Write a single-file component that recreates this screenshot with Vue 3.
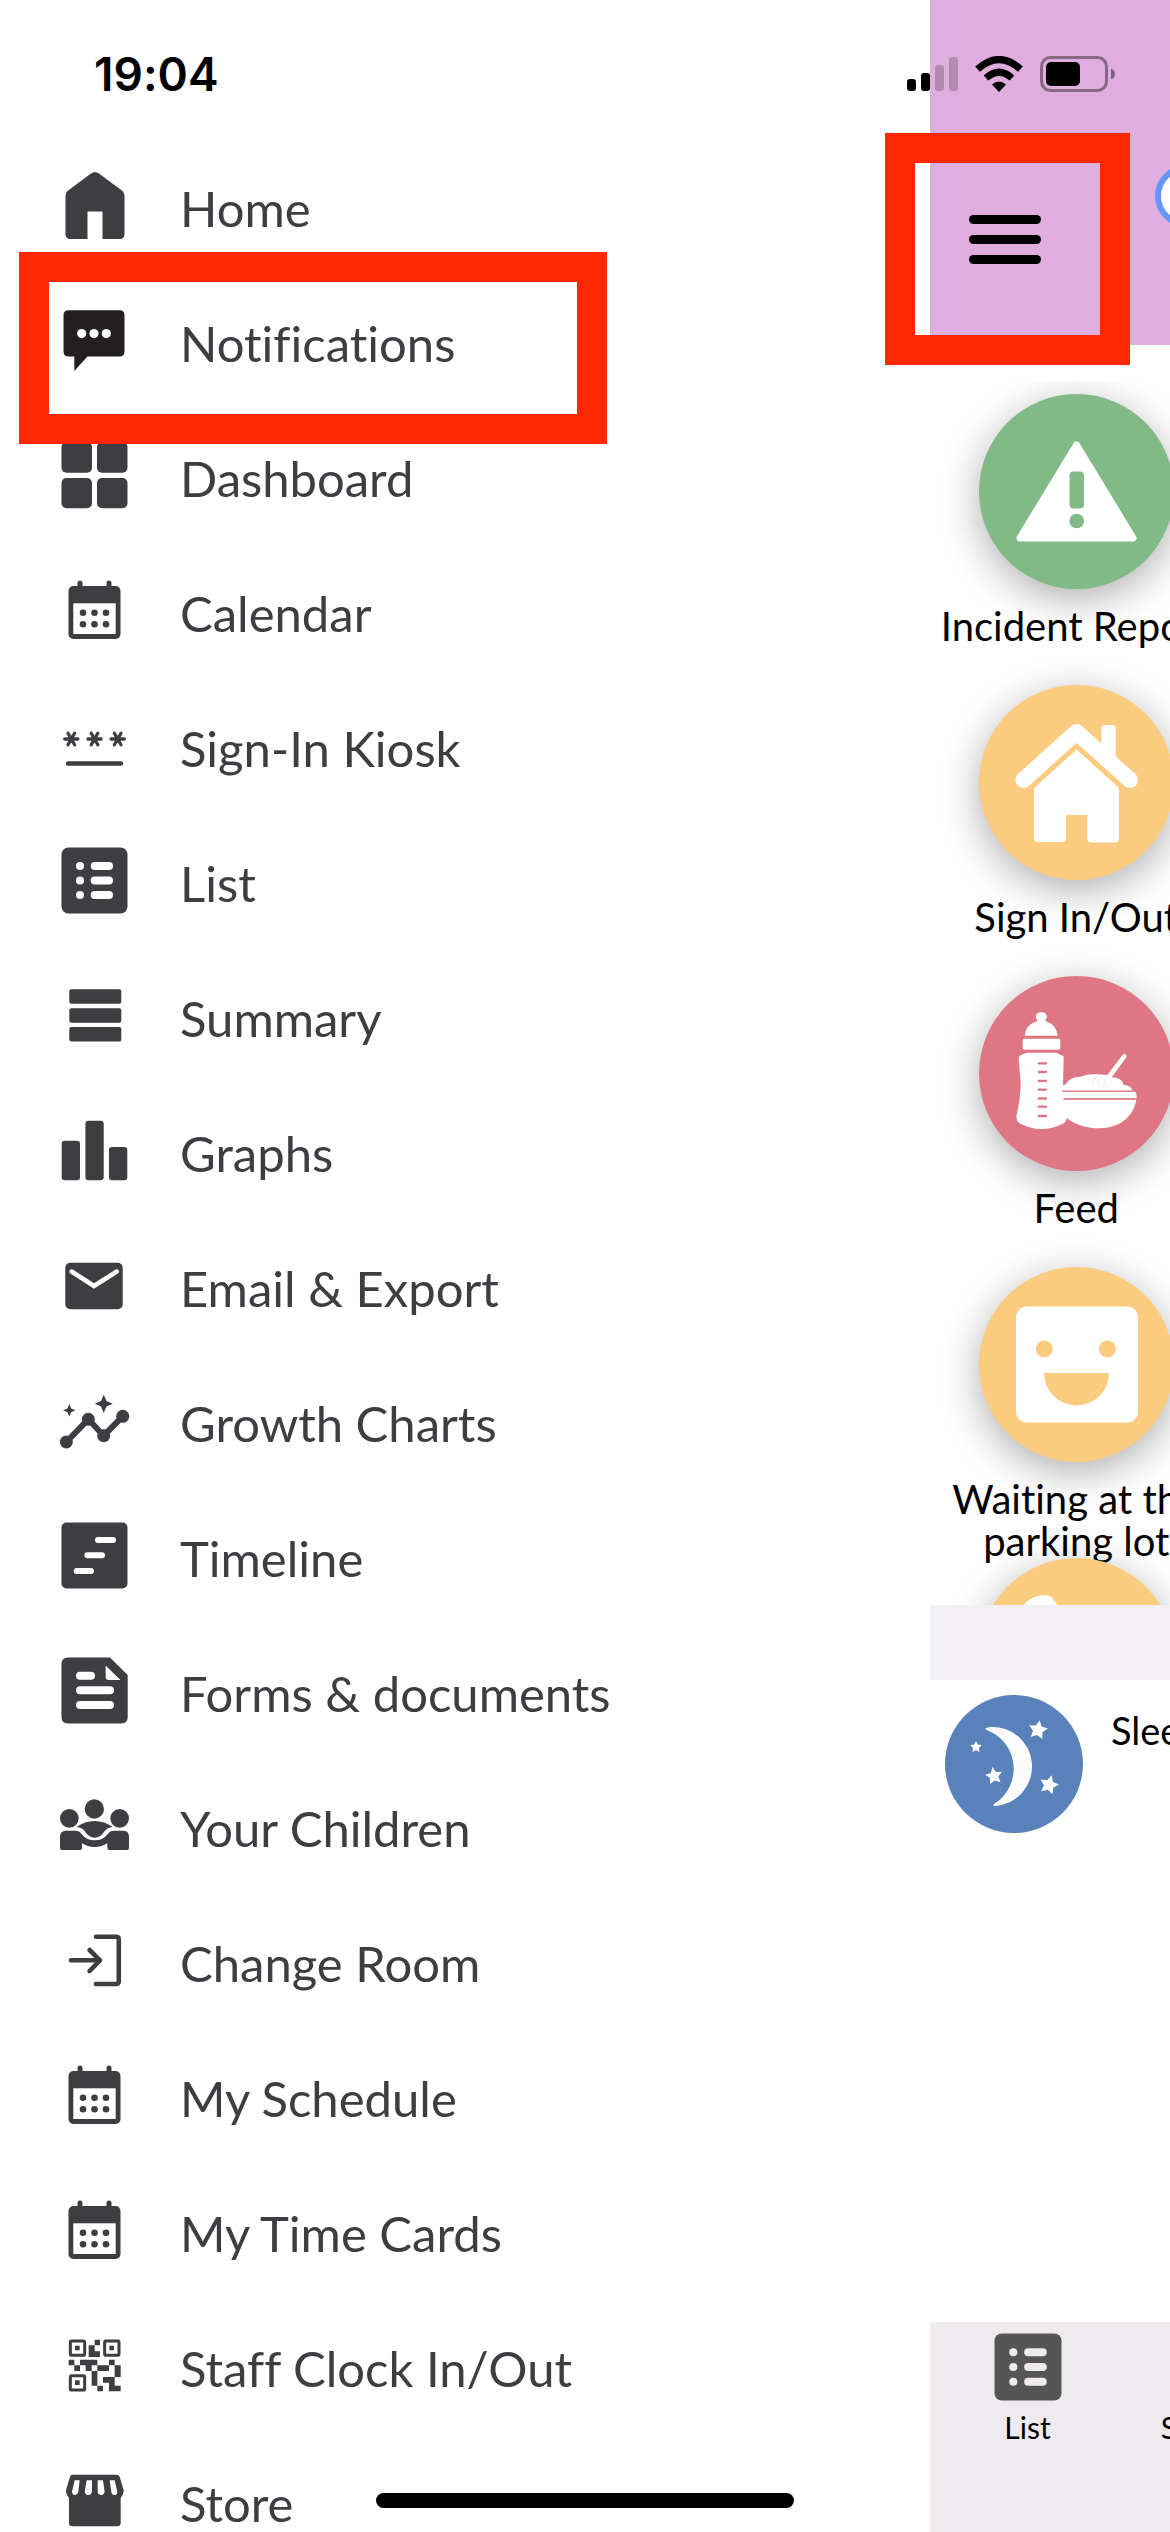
<script setup>
import { ref } from 'vue'

const box = '0 0 71 71'

const calendar = `
  <path d="M21 12V8M50 12V8" stroke="currentColor" stroke-width="5" stroke-linecap="round"/>
  <rect x="9.5" y="11" width="52" height="53" rx="5"/>
  <rect x="14.3" y="28.3" width="42.4" height="30.7" fill="#fff"/>
  <circle cx="24" cy="37.7" r="3.3"/><circle cx="35.5" cy="37.7" r="3.3"/><circle cx="47" cy="37.7" r="3.3"/>
  <circle cx="24" cy="49.3" r="3.3"/><circle cx="35.5" cy="49.3" r="3.3"/><circle cx="47" cy="49.3" r="3.3"/>`

const asterisk = x => `M${x - 6.6} 29h13.2M${x - 3.3} 23.2l6.6 11.6M${x + 3.3} 23.2l-6.6 11.6`

const listIcon = hole => `
  <rect x="2.5" y="2.5" width="66" height="66" rx="7"/>
  <g fill="${hole}">
    <circle cx="21" cy="21" r="4"/><circle cx="21" cy="35.5" r="4"/><circle cx="21" cy="50" r="4"/>
    <rect x="31.7" y="17" width="22.3" height="8" rx="4"/>
    <rect x="31.7" y="31.5" width="22.3" height="8" rx="4"/>
    <rect x="31.7" y="46" width="22.3" height="8" rx="4"/>
  </g>`

const menu = ref([
  {
    label: 'Home',
    svg: `<path d="M32 3.6Q36 .4 40 3.6L63.500 21Q65.500 23 65.500 26V64Q65.500 69 60.500 69H43.500V41.500H28.500V69H11.500Q6.500 69 6.500 64V26Q6.500 23 8.500 21Z"/>`
  },
  {
    label: 'Notifications',
    dark: true,
    svg: `<path d="M9.500 5.300H60.500Q65.500 5.300 65.500 10.300V46.500Q65.500 51.500 60.500 51.500H28.400L15.300 66V51.500H9.500Q4.500 51.500 4.500 46.500V10.300Q4.500 5.300 9.500 5.300Z"/>
      <g fill="#fff"><circle cx="22.700" cy="28.600" r="4.600"/><circle cx="35" cy="28.600" r="4.600"/><circle cx="47.300" cy="28.600" r="4.600"/></g>`
  },
  {
    label: 'Dashboard',
    svg: `<rect x="2.500" y="2" width="30.500" height="30.700" rx="5"/><rect x="38" y="2" width="30.500" height="30.700" rx="5"/>
      <rect x="2.500" y="38" width="30.500" height="30.300" rx="5"/><rect x="38" y="38" width="30.500" height="30.300" rx="5"/>`
  },
  { label: 'Calendar', svg: calendar },
  {
    label: 'Sign-In Kiosk',
    svg: `<path d="${asterisk(12.3)}${asterisk(35.5)}${asterisk(58.7)}" fill="none" stroke="currentColor" stroke-width="3.300" stroke-linecap="round"/>
      <path d="M9 53.500H62" stroke="currentColor" stroke-width="4.400" stroke-linecap="round"/>`
  },
  { label: 'List', svg: listIcon('#fff') },
  {
    label: 'Summary',
    svg: `<rect x="10.300" y="9.300" width="52" height="14.400" rx="2"/><rect x="10.300" y="28.300" width="52" height="14.400" rx="2"/><rect x="10.300" y="47" width="52" height="14.400" rx="2"/>`
  },
  {
    label: 'Graphs',
    svg: `<rect x="2.700" y="25.700" width="18.300" height="39.600" rx="3"/><rect x="26.400" y="5.700" width="18.300" height="59.600" rx="3"/><rect x="50" y="32" width="18.300" height="33.300" rx="3"/>`
  },
  {
    label: 'Email & Export',
    svg: `<rect x="6.300" y="12.700" width="57.400" height="46.600" rx="5"/>
      <path d="M12.700 21.500L35 36L57.700 21.500" fill="none" stroke="#fff" stroke-width="4.500" stroke-linecap="round"/>`
  },
  {
    label: 'Growth Charts',
    svg: `<path d="M7.300 57L29.300 34.300L44.700 50.700L63.700 31.300" fill="none" stroke="currentColor" stroke-width="6"/>
      <circle cx="7.300" cy="57" r="6.500"/><circle cx="29.300" cy="34.300" r="6.500"/><circle cx="44.700" cy="50.700" r="6.500"/><circle cx="63.700" cy="31.300" r="6.500"/>
      <path d="M44.700 9.700L47.500 16L53.700 18.700L47.500 21.500L44.700 28L42 21.500L35.700 18.700L42 16ZM10.300 19L12.200 23.400L16.500 25.300L12.200 27.200L10.300 31.500L8.400 27.200L4 25.300L8.400 23.400Z"/>`
  },
  {
    label: 'Timeline',
    svg: `<rect x="2.500" y="2.500" width="66" height="66" rx="5"/>
      <path d="M39 20H54M28.300 35.300H43M17.700 51H32" stroke="#fff" stroke-width="6" stroke-linecap="round"/>`
  },
  {
    label: 'Forms & documents',
    svg: `<path d="M9 2.500H51L68.700 20V62Q68.700 68.500 62 68.500H9Q2.500 68.500 2.500 62V9Q2.500 2.500 9 2.500Z"/>
      <path d="M46.600 10.500V22Q46.600 25 49.600 25H61.400Z" fill="#fff"/>
      <path d="M21 20.700H32M21 35.300H51M21 50H51" stroke="#fff" stroke-width="8" stroke-linecap="round"/>`
  },
  {
    label: 'Your Children',
    box: '15 30 213 213',
    svg: `<circle cx="46" cy="115" r="28"/><circle cx="121" cy="87" r="29"/><circle cx="197" cy="115" r="28"/>
      <path d="M68 141Q92 123 122 123T176 141Q160 143 152 153Q140 173 122 173T92 153Q84 143 68 141Z"/>
      <path d="M18 204V170Q18 152 36 152H64Q76 152 82 161Q97 181 122 181T162 161Q168 152 180 152H208Q225 152 225 170V204Q225 210 219 210H166Q160 210 160 204V190Q143 201 122 201T84 190V204Q84 210 78 210H24Q18 210 18 204Z"/>`
  },
  {
    label: 'Change Room',
    svg: `<path d="M37 11.700H57Q59.800 11.700 59.800 14.500V56Q59.800 59 57 59H37M12 35.300H41M30.600 25L41 35.300L30.600 46" fill="none" stroke="currentColor" stroke-width="4.600" stroke-linecap="round" stroke-linejoin="round"/>`
  },
  { label: 'My Schedule', svg: calendar },
  { label: 'My Time Cards', svg: calendar },
  {
    label: 'Staff Clock In/Out',
    box: '15 15 213 213',
    svg: `<g fill="none" stroke="currentColor" stroke-width="9"><rect x="49" y="48" width="43" height="43" rx="4"/><rect x="152" y="48" width="43" height="43" rx="4"/><rect x="49" y="152" width="43" height="43" rx="4"/></g>
      <path d="M63 62h14v14h-14zM166 62h14v14h-14zM63 166h14v14h-14z
      M122 44h16v17h-16zM104 61h18v18h16v17h-34z
      M44 104h17v17h-17zM61 121h17v17h-17zM78 104h52v17h-17v17h-18v-17h-17zM165 104h17v17h-17zM130 121h35v17h-35zM182 121h18v35h-18zM113 138h17v44h-17zM130 182h17v17h-17zM147 156h35v26h18v17h-35v-26h-18z"/>`
  },
  {
    label: 'Store',
    box: '15 420 213 213',
    svg: `<path d="M56 449H188Q194 449 197 455L209 496Q209 510 200 518V594Q200 604 190 604H55Q45 604 45 594V518Q36 510 36 496L48 455Q50 449 56 449Z"/>
      <path d="M62 466H77L73 501Q70 510 63 510T54 500ZM98 466H114V501Q111 510 103 510T92 500ZM131 466H147L152 500Q149 510 141 510T131 501ZM167 466H182L190 500Q189 510 181 510T172 501Z" fill="#fff"/>`
  }
])

const tiles = ref([
  {
    label: 'Incident Report',
    color: 'green',
    box: '0 0 195 195',
    svg: `<path d="M97.500 51L154 144H41Z" stroke="#fff" stroke-width="7" stroke-linejoin="round"/>
      <rect class="hole" x="90.500" y="77.500" width="14.500" height="37" rx="4"/><circle class="hole" cx="97.700" cy="127" r="7.300"/>`
  },
  {
    label: 'Sign In/Out',
    color: 'orange',
    box: '0 0 195 195',
    svg: `<path d="M44.500 95L97.500 47L151 95" fill="none" stroke="#fff" stroke-width="16" stroke-linecap="round" stroke-linejoin="round"/>
      <path d="M122.300 66V44Q122.300 40 126.300 40H132.700Q136.700 40 136.700 44V76Z"/>
      <path d="M97.600 64.500L140 103V153Q140 157.500 135.500 157.500H112.500Q108.300 157.500 108.300 153V130H87V153Q87 157 83 157H59Q55 157 55 153V103Z"/>`
  },
  {
    label: 'Feed',
    color: 'red',
    box: '205 79 585 585',
    svg: `<path d="M342 258Q344 224 379 215V209Q374 206 376 198Q378 188 392 188T408 198Q410 206 405 209V215Q438 224 441 258Z"/>
      <rect x="336" y="267" width="113" height="33" rx="6"/>
      <path d="M348 309H436L456 318Q460 320 459 326L457 410H455Q458 405 465 404Q478 380 510 381Q530 373 552 374T590 376L636 315Q640 311 646 315Q650 320 646 324L603 383Q634 384 639 406Q660 406 666 423H455V426H672Q678 427 678 446H459V450H677Q670 495 630 520Q590 541 540 534Q500 530 468 505Q468 516 455 523Q425 538 392 538T325 520Q316 510 317 500Q330 445 330 400L324 326Q325 320 330 317Z"/>
      <path class="line" d="M455 424.500H672M459 448H677"/>
      <path class="dashes" d="M384 341h22M384 367h22M384 393.500h22M384 420h22M384 446.500h22M384 471h22M384 499h22"/>
      <path class="crumbs" d="M560 378L541 408M572 382L560 404M580 394L588 412M568 402L582 414"/>`
  },
  {
    label: 'Waiting at the parking lot',
    color: 'orange',
    box: '0 0 195 195',
    svg: `<rect x="37" y="39.500" width="122" height="116" rx="11"/>
      <circle class="hole" cx="65.300" cy="82" r="8.500"/><circle class="hole" cx="128.300" cy="82" r="8.500"/>
      <path class="hole" d="M65 106H130A32.500 32.500 0 0 1 65 106Z"/>`
  },
  {
    label: '',
    color: 'orange',
    box: '0 0 195 195',
    svg: `<path d="M45 47Q52 37 67 37Q73 37 78 47L84 60L60 80Z"/>`
  }
])

const tabs = ref(['List', 'Summary'])

// five pointed star around cx, cy
const star = (cx, cy, r, turn) => {
  const pts = []
  for (let i = 0; i < 10; i++) {
    const a = (turn + i * 36 - 90) * Math.PI / 180
    const d = i % 2 ? r * 0.5 : r
    pts.push(`${(cx + d * Math.cos(a)).toFixed(1)},${(cy + d * Math.sin(a)).toFixed(1)}`)
  }
  return pts.join(' ')
}
const stars = [star(93, 35, 10, 10), star(31, 52, 6, 0), star(49, 81, 9, -10), star(104, 90, 10, 15)]
</script>

<template>
  <div class="screen">
    <header class="status">
      <time>19:04</time>
      <div class="status-icons">
        <svg width="51" height="36" viewBox="0 0 51 36">
          <rect x="0" y="23" width="9" height="12" rx="3"/>
          <rect x="14" y="17" width="9" height="18" rx="3"/>
          <rect x="28" y="9" width="9" height="26" rx="3" opacity=".2"/>
          <rect x="42" y="1" width="9" height="34" rx="3" opacity=".2"/>
        </svg>
        <svg width="48" height="36" viewBox="0 0 48 36">
          <path d="M2.500 13.200Q24-6.200 45.500 13.200" fill="none" stroke="#000" stroke-width="7"/>
          <path d="M11 22Q24 10.500 37 22" fill="none" stroke="#000" stroke-width="7"/>
          <path d="M17 28.500Q24 22.500 31 28.500L24 36Z"/>
        </svg>
        <svg width="75" height="36" viewBox="0 0 75 36">
          <rect x="1.500" y="1.500" width="65" height="33" rx="9" fill="none" stroke="#000" stroke-width="3" opacity=".4"/>
          <rect x="6" y="6" width="34" height="24" rx="5"/>
          <path d="M71 12.500Q75 14 75 18T71 23.500Z" opacity=".45"/>
        </svg>
      </div>
    </header>

    <nav class="drawer">
      <a v-for="item in menu" :key="item.label" href="#" class="menu-item">
        <svg class="menu-icon" :class="{ dark: item.dark }" :viewBox="item.box || box" v-html="item.svg"></svg>
        <span>{{ item.label }}</span>
      </a>
    </nav>

    <main class="peek">
      <div class="app">
        <div class="topbar">
          <button class="burger" aria-label="Menu"><i></i><i></i><i></i></button>
          <div class="avatar"></div>
        </div>

        <div class="tiles">
          <button v-for="(tile, i) in tiles" :key="i" class="tile" :class="tile.color">
            <svg class="disc" :viewBox="tile.box" v-html="tile.svg"></svg>
            <span>{{ tile.label }}</span>
          </button>
        </div>

        <div class="divider"></div>

        <div class="entry">
          <svg class="sleep" viewBox="0 0 138 138">
            <path d="M41 34.700Q39 33 45 32A39.400 39.400 0 1 1 50 111Q47 111 49 109A41.400 41.400 0 0 0 41 34.700Z"/>
            <polygon v-for="s in stars" :key="s" :points="s"/>
          </svg>
          <span>Sleep</span>
        </div>

        <footer class="tabs">
          <a v-for="tab in tabs" :key="tab" href="#" class="tab">
            <svg class="tab-icon" :viewBox="box" v-html="listIcon('#eeeaee')"></svg>
            <span>{{ tab }}</span>
          </a>
        </footer>
      </div>
    </main>

    <div class="mark mark-notifications"></div>
    <div class="mark mark-burger"></div>
    <div class="home-indicator"></div>
  </div>
</template>

<style>
body{
  background: #fff;
}
</style>

<style scoped>
.screen{
  position: relative;
  display: flex;
  height: 100vh;
  overflow: hidden;
  background: #fff;
  font-family: Lato, "Open Sans", sans-serif;
  font-variant-ligatures: none;
  color: #000;
}
a{
  color: inherit;
  text-decoration: none;
}
button{
  padding: 0;
  border: 0;
  background: none;
  font: inherit;
  font-variant-ligatures: none;
  color: inherit;
}
.status{
  position: absolute;
  top: 0;
  left: 0;
  right: 0;
  z-index: 2;
  display: flex;
  justify-content: space-between;
  align-items: center;
  height: 148px;
  padding: 0 55px 0 94px;
}
.status time{
  font-family: Inter, sans-serif;
  font-size: 46px;
  font-weight: 600;
}
.status-icons{
  display: flex;
  gap: 17px;
}

.drawer{
  flex: 1;
  min-width: 0;
  padding-top: 138px;
}
.menu-item{
  display: flex;
  align-items: center;
  gap: 50px;
  height: 135px;
  padding-left: 59px;
  font-size: 49px;
  color: #3d3d42;
}
.menu-item span{
  padding-top: 4px;
}
.menu-icon{
  width: 71px;
  height: 71px;
  color: #3d3d42;
  fill: currentColor;
}
.menu-icon.dark{
  fill: #231f20;
}

.peek{
  flex: 0 0 240px;
  overflow: hidden;
}
.app{
  display: flex;
  flex-direction: column;
  width: 100vw;
  height: 100%;
}
.topbar{
  display: flex;
  align-items: flex-start;
  gap: 114px;
  height: 345px;
  padding: 165px 39px 0;
  box-sizing: border-box;
  background: #dfaede;
}
.burger{
  display: flex;
  flex-direction: column;
  gap: 11px;
  width: 72px;
  padding-top: 50px;
}
.burger i{
  height: 9px;
  border-radius: 5px;
  background: #000;
}
.avatar{
  width: 50px;
  height: 50px;
  border: 6px solid #6495f7;
  border-radius: 50%;
  background: #fff;
}
.tiles{
  height: 1224px;
  margin-top: 36px;
  padding-top: 13px;
  box-sizing: border-box;
  overflow: hidden;
}
.tile{
  display: flex;
  flex-direction: column;
  align-items: center;
  gap: 16px;
  width: 25%;
  height: 291px;
  font-size: 40px;
  line-height: 42px;
}
.disc{
  flex: none;
  width: 195px;
  height: 195px;
  border-radius: 50%;
  background: currentColor;
  fill: #fff;
  box-shadow: 0 10px 40px rgba(0, 0, 0, .32);
}
.green .disc{
  color: #81b987;
}
.orange .disc{
  color: #fbcc80;
}
.red .disc{
  color: #de7783;
}
.disc :deep(.hole){
  fill: currentColor;
}
.disc :deep(.line),
.disc :deep(.dashes),
.disc :deep(.crumbs){
  fill: none;
  stroke: currentColor;
  stroke-width: 3;
}
.disc :deep(.dashes){
  stroke-width: 7;
  stroke-linecap: round;
}
.disc :deep(.crumbs){
  stroke-width: 2;
  stroke-dasharray: 3 6;
}
.divider{
  height: 75px;
  background: #f2f0f4;
}
.entry{
  display: flex;
  flex: 1;
  align-items: flex-start;
  gap: 28px;
  padding: 15px;
  font-size: 38px;
  line-height: 70px;
}
.sleep{
  width: 138px;
  height: 138px;
  border-radius: 50%;
  background: #5982ba;
  fill: #fcfcfc;
}
.tabs{
  display: flex;
  height: 210px;
  background: #eeeaee;
}
.tab{
  display: flex;
  flex-direction: column;
  align-items: center;
  gap: 6px;
  width: 195px;
  padding-top: 9px;
  font-size: 30px;
  line-height: 36px;
}
.tab-icon{
  width: 72px;
  height: 72px;
  fill: #555;
}

.mark{
  position: absolute;
  z-index: 3;
  box-sizing: border-box;
  border: 30px solid #ff2800;
}
.mark-notifications{
  top: 252px;
  left: 19px;
  width: 588px;
  height: 192px;
}
.mark-burger{
  top: 133px;
  right: 40px;
  width: 245px;
  height: 232px;
}
.home-indicator{
  position: absolute;
  bottom: 24px;
  left: 50%;
  z-index: 4;
  width: 418px;
  height: 15px;
  margin-left: -209px;
  border-radius: 8px;
  background: #000;
}
</style>
